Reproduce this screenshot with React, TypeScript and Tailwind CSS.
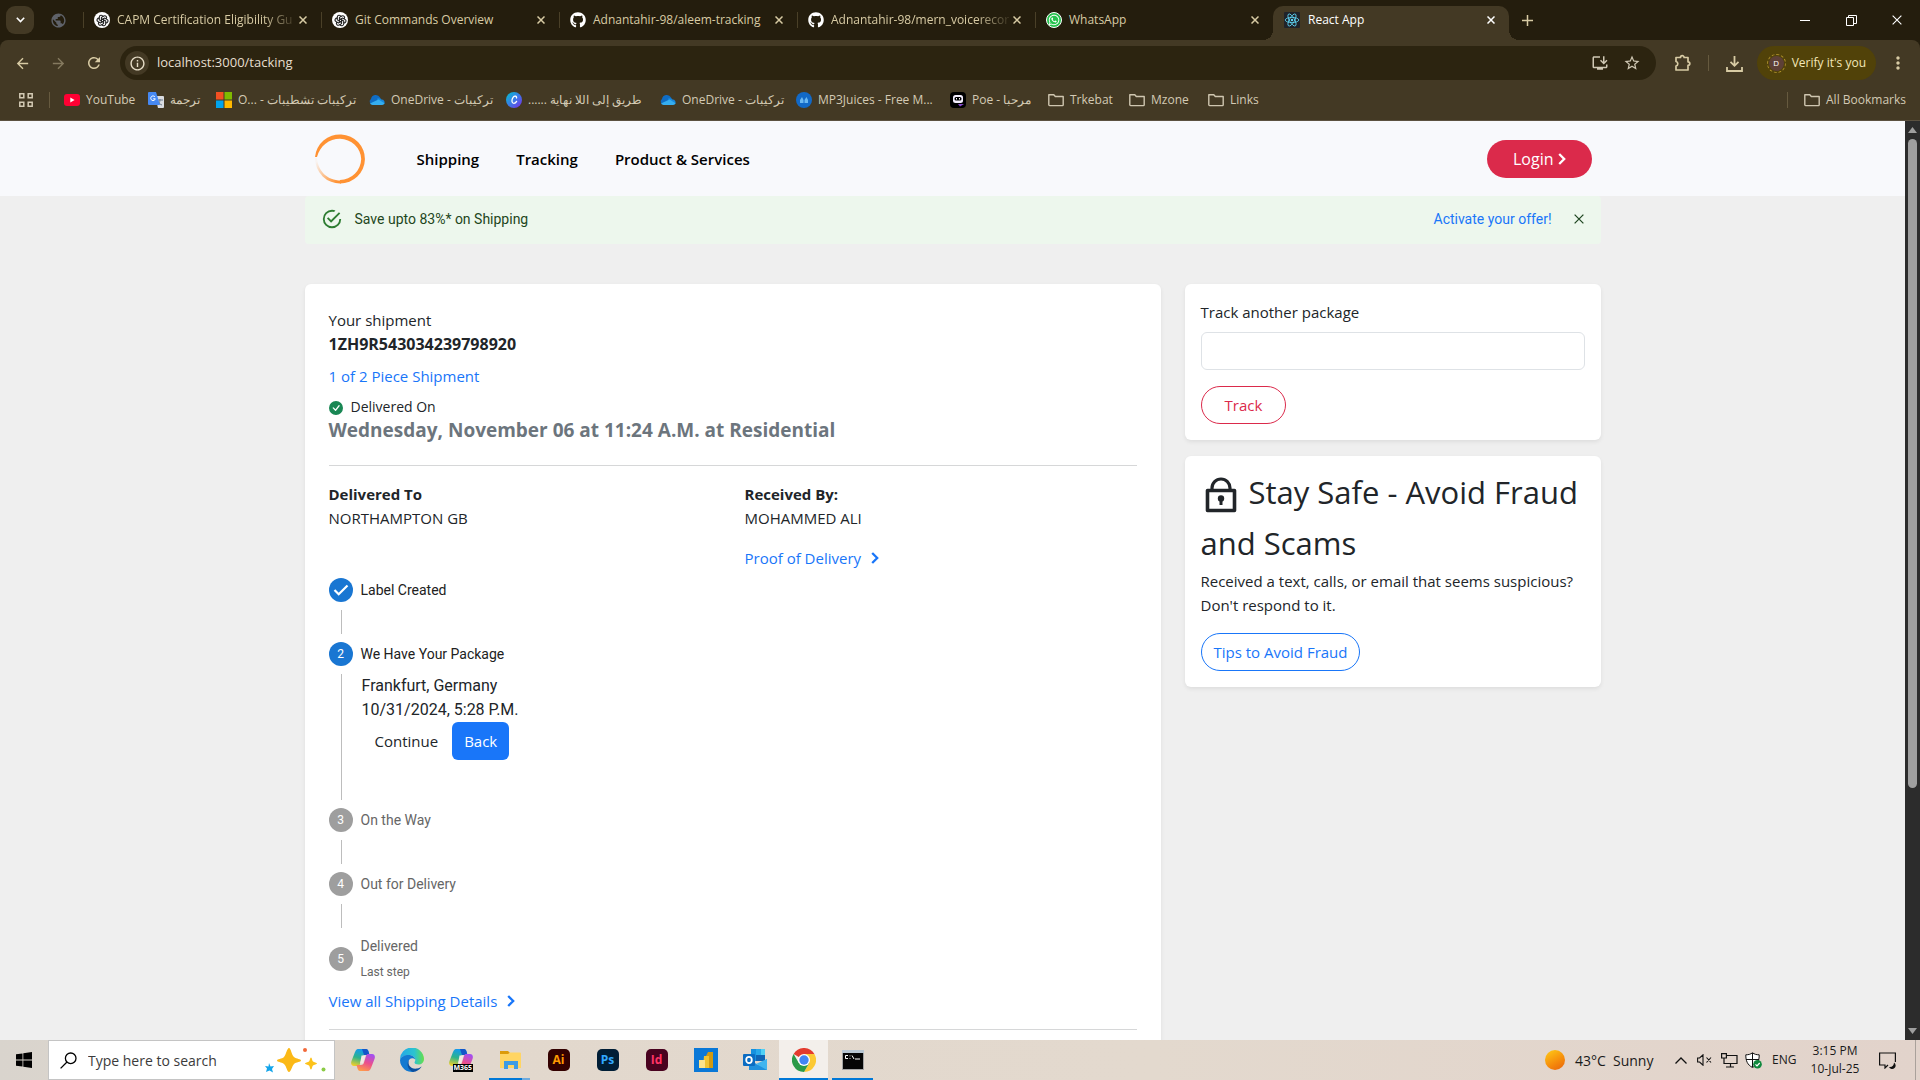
import React from "react";
import type { ReactNode } from "react";
import { FaGithub, FaWhatsapp } from "react-icons/fa";
import { TbBrandOpenai } from "react-icons/tb";
import {
  MdArrowBack,
  MdArrowForward,
  MdRefresh,
  MdInstallDesktop,
  MdStarBorder,
  MdMoreVert,
  MdPublic,
  MdInfoOutline,
} from "react-icons/md";
import { BsCheckCircleFill } from "react-icons/bs";

const CloseGlyph = ({ size = 8, width = 1.5 }: { size?: number; width?: number }) => (
  <svg width={size} height={size} viewBox="0 0 8 8" fill="none" stroke="currentColor" strokeWidth={width} aria-hidden="true">
    <path d="M.5.5l7 7M7.5.5l-7 7" />
  </svg>
);

const OpenAiIcon = () => (
  <span className="flex size-4 flex-none items-center justify-center rounded-full bg-white text-[#222]">
    <TbBrandOpenai size={13} />
  </span>
);

const GithubIcon = () => <FaGithub size={16} color="#fff" className="flex-none" />;

const WhatsAppIcon = () => (
  <span className="flex size-4 flex-none items-center justify-center rounded-full border border-white bg-[#25c24d] text-white">
    <FaWhatsapp size={12} />
  </span>
);

const ReactIcon = () => (
  <svg width="16" height="16" viewBox="0 0 16 16" fill="none" stroke="#61dafb" strokeWidth=".8" aria-hidden="true">
    <rect width="16" height="16" rx="1" fill="#20232a" stroke="none" />
    <circle cx="8" cy="8" r="1.2" fill="#61dafb" stroke="none" />
    <ellipse cx="8" cy="8" rx="6.8" ry="2.6" />
    <ellipse cx="8" cy="8" rx="6.8" ry="2.6" transform="rotate(60 8 8)" />
    <ellipse cx="8" cy="8" rx="6.8" ry="2.6" transform="rotate(120 8 8)" />
  </svg>
);

const YoutubeIcon = () => (
  <svg width="16" height="16" viewBox="0 0 16 16" aria-hidden="true">
    <rect y="2" width="16" height="12" rx="3" fill="#ff0033" />
    <path d="M6.3 5.6v4.8L10.6 8z" fill="#fff" />
  </svg>
);

const TranslateIcon = () => (
  <svg width="16" height="16" viewBox="0 0 16 16" aria-hidden="true">
    <path d="M7 4h8a1 1 0 0 1 1 1v10a1 1 0 0 1-1 1H10z" fill="#dadce0" />
    <path d="M9 8h6M12 7v1c0 2-1.500 4-3 5M10 9.500c1 2 2.500 3 4 3.500" stroke="#6b7b8c" strokeWidth="1" fill="none" />
    <path d="M1 0h7l4 13H1a1 1 0 0 1-1-1V1a1 1 0 0 1 1-1z" fill="#4688f1" />
    <path d="M7 5A2.300 2.300 0 1 0 7.300 6.800H5.200" stroke="#fff" strokeWidth="1" fill="none" />
  </svg>
);

const MicrosoftIcon = () => (
  <svg width="16" height="16" viewBox="0 0 16 16" aria-hidden="true">
    <path d="M0 0h7.500v7.500H0z" fill="#f25022" />
    <path d="M8.500 0H16v7.500H8.500z" fill="#7fba00" />
    <path d="M0 8.500h7.500V16H0z" fill="#00a4ef" />
    <path d="M8.500 8.500H16V16H8.500z" fill="#ffb900" />
  </svg>
);

const OneDriveIcon = () => (
  <svg width="16" height="16" viewBox="0 0 16 16" aria-hidden="true">
    <path d="M3.500 12.500A3 3 0 0 1 2 7a4.800 4.800 0 0 1 9-1.500l1 2z" fill="#0f6cc4" />
    <path d="M8 6.500A4.400 4.400 0 0 1 12.600 7.500a3 3 0 0 1 2.600 4.500L9 12z" fill="#1688dd" />
    <path d="M1 11.500 9.500 7.500l6 3.700a2.500 2.500 0 0 1-2.300 1.800H3.500A3 3 0 0 1 1 11.500z" fill="#35aef0" />
  </svg>
);

const CanvaIcon = () => (
  <svg width="16" height="16" viewBox="0 0 16 16" fill="none" aria-hidden="true">
    <defs>
      <linearGradient id="canva" x1="0" y1="0" x2="1" y2="1">
        <stop offset="0" stopColor="#00c4cc" />
        <stop offset=".5" stopColor="#3a7be8" />
        <stop offset="1" stopColor="#7d2ae8" />
      </linearGradient>
    </defs>
    <circle cx="8" cy="8" r="8" fill="url(#canva)" />
    <path d="M10.500 6c.6-2-2-2.500-3.400-.6-1.800 2.400-1.500 6 .7 6 1.200 0 2.200-.9 2.800-2" stroke="#fff" strokeWidth="1.300" strokeLinecap="round" />
  </svg>
);

const JuiceIcon = () => (
  <svg width="16" height="16" viewBox="0 0 16 16" aria-hidden="true">
    <circle cx="8" cy="8" r="8" fill="#1269c7" />
    <path d="M4 11V8l2-3 1.500 3v3zM8.500 11V8l2-3L12 8v3z" fill="#6ab8f2" />
  </svg>
);

const PoeIcon = () => (
  <svg width="16" height="16" viewBox="0 0 16 16" aria-hidden="true">
    <rect width="16" height="16" rx="4" fill="#000" />
    <path d="M8 12h6l-4 2.500z" fill="#8a4bd0" />
    <rect x="3" y="3" width="10" height="8" rx="2.500" fill="#f5f0ff" />
    <rect x="4.500" y="5" width="7" height="3.500" rx="1.500" fill="#000" />
    <path d="M6.500 6v1.500M9.500 6v1.500" stroke="#fff" />
  </svg>
);

const FolderIcon = () => (
  <svg width="16" height="16" viewBox="0 0 16 16" fill="none" stroke="#cfc6b0" strokeWidth="1.400" strokeLinejoin="round" aria-hidden="true">
    <path d="M.8 12.800V2.700h5l1.500 1.800h7.900v8.300a.8.8 0 0 1-.8.800H1.600a.8.8 0 0 1-.8-.8z" />
  </svg>
);

const tabs: { icon: ReactNode; title: string; clipped?: boolean }[] = [
  { icon: <OpenAiIcon />, title: "CAPM Certification Eligibility Gu", clipped: true },
  { icon: <OpenAiIcon />, title: "Git Commands Overview" },
  { icon: <GithubIcon />, title: "Adnantahir-98/aleem-tracking" },
  { icon: <GithubIcon />, title: "Adnantahir-98/mern_voicerecor", clipped: true },
  { icon: <WhatsAppIcon />, title: "WhatsApp" },
];

function TabStrip() {
  return (
    <div className="flex h-10 bg-[#241d0d] text-[#d8cba4]">
      <button aria-label="Search tabs" className="mt-[6px] ml-[6px] flex size-7 items-center justify-center rounded-[9px] bg-[#433924] text-white">
        <svg width="9" height="6" viewBox="0 0 9 6" fill="none" stroke="currentColor" strokeWidth="1.600" aria-hidden="true">
          <path d="M.8.8l3.700 3.700L8.200.8" />
        </svg>
      </button>
      <button aria-label="Pinned tab" className="flex w-[49px] items-center justify-center text-[#5f6269]">
        <MdPublic size={17} />
      </button>
      {tabs.map((t, i) => (
        <div key={i} className="flex w-[238px] min-w-0 items-center">
          <span className="h-4 w-px bg-[#4a4028]" />
          <div className="flex min-w-0 flex-1 items-center pr-[14px] pl-[10px]">
            {t.icon}
            <span
              className={
                t.clipped
                  ? "ml-[7px] flex-1 text-[12px] whitespace-nowrap [mask-image:linear-gradient(to_right,#000_80%,transparent)]"
                  : "ml-[7px] flex-1 text-[12px] whitespace-nowrap"
              }
            >
              {t.title}
            </span>
            <button aria-label="Close tab" className="flex-none">
              <CloseGlyph />
            </button>
          </div>
        </div>
      ))}
      <div className="relative mt-[6px] flex w-[236px] items-center gap-2 rounded-t-[10px] bg-[#433924] pr-[14px] pb-[6px] pl-[11px] text-white">
        <span className="absolute bottom-0 -left-2.5 size-2.5 bg-[radial-gradient(circle_at_0_0,transparent_10px,#433924_10px)]" />
        <span className="absolute -right-2.5 bottom-0 size-2.5 bg-[radial-gradient(circle_at_100%_0,transparent_10px,#433924_10px)]" />
        <ReactIcon />
        <span className="flex-1 text-[12px]">React App</span>
        <button aria-label="Close tab">
          <CloseGlyph />
        </button>
      </div>
      <button aria-label="New tab" className="flex w-9 items-center justify-center">
        <svg width="11" height="11" viewBox="0 0 11 11" stroke="currentColor" strokeWidth="1.500" aria-hidden="true">
          <path d="M5.500 0v11M0 5.500h11" />
        </svg>
      </button>
      <div className="ml-auto flex text-white">
        <button aria-label="Minimize" className="flex w-[46px] items-center justify-center">
          <span className="h-px w-2.5 bg-white" />
        </button>
        <button aria-label="Restore" className="flex w-[46px] items-center justify-center">
          <svg width="11" height="11" viewBox="0 0 11 11" fill="none" stroke="currentColor" aria-hidden="true">
            <path d="M.5 2.500h7v8h-7zM2.500 2.500v-2h8v8h-3" />
          </svg>
        </button>
        <button aria-label="Close window" className="flex w-[46px] items-center justify-center">
          <CloseGlyph size={10} width={0.9} />
        </button>
      </div>
    </div>
  );
}

function Toolbar() {
  return (
    <div className="flex h-[46px] items-center rounded-t-[8px] bg-[#433924] pt-[6px] pb-[6px] text-[#d8cba4]">
      <button aria-label="Back" className="ml-1 flex w-9 justify-center">
        <MdArrowBack size={17} />
      </button>
      <button aria-label="Forward" className="flex w-9 justify-center text-[#857a5f]">
        <MdArrowForward size={17} />
      </button>
      <button aria-label="Reload" className="flex w-9 justify-center">
        <MdRefresh size={18} />
      </button>
      <div className="ml-2 flex h-[34px] min-w-0 flex-1 items-center rounded-full bg-[#2c2410] pr-2 pl-[5px]">
        <button aria-label="Site information" className="flex size-6 items-center justify-center rounded-full bg-[#433924] text-[#e5dcc6]">
          <MdInfoOutline size={17} />
        </button>
        <input
          aria-label="Address"
          className="ml-2 min-w-0 flex-1 bg-transparent text-[13px] text-[#e6dfcf] outline-none"
          defaultValue="localhost:3000/tacking"
        />
        <button aria-label="Install app" className="flex w-8 justify-center text-[#d0c8b4]">
          <MdInstallDesktop size={18} />
        </button>
        <button aria-label="Bookmark this page" className="flex w-8 justify-center text-[#d0c8b4]">
          <MdStarBorder size={18} />
        </button>
      </div>
      <button aria-label="Extensions" className="ml-2 flex w-[38px] justify-center">
        <svg width="18" height="18" viewBox="0 0 18 18" fill="none" stroke="currentColor" strokeWidth="1.700" strokeLinejoin="round" aria-hidden="true">
          <path d="M2 3.500h4.500a1.800 1.800 0 0 1 3.600 0H14v4.300a1.800 1.800 0 0 1 0 3.600V16H2v-4a2.300 2.300 0 0 0 0-4.500z" />
        </svg>
      </button>
      <span className="ml-[6px] h-4 w-px bg-[#665a3f]" />
      <button aria-label="Downloads" className="ml-2 flex w-9 justify-center">
        <svg width="17" height="17" viewBox="0 0 17 17" fill="none" stroke="currentColor" strokeWidth="1.800" aria-hidden="true">
          <path d="M8.500 1v9.500M4.500 6.800l4 4 4-4M1 12v4h15v-4" />
        </svg>
      </button>
      <button className="ml-1 flex h-[34px] items-center gap-[6px] rounded-full bg-[#514209] pr-2.5 pl-2.5 text-[12px] font-medium text-[#f3e7b8]">
        <span className="flex size-[19px] items-center justify-center rounded-full border border-dashed border-[#b0912c]">
          <span className="flex size-[15px] items-center justify-center rounded-full bg-[#5d4037] text-[8px] text-white">D</span>
        </span>
        Verify it's you
      </button>
      <button aria-label="Menu" className="mx-1 flex w-9 justify-center">
        <MdMoreVert size={20} />
      </button>
    </div>
  );
}

const bookmarks = [
  { icon: <YoutubeIcon />, label: "YouTube", width: "w-[84px]" },
  { icon: <TranslateIcon />, label: "ترجمة", width: "w-[68px]" },
  { icon: <MicrosoftIcon />, label: "O... - تركيبات تشطيبات", width: "w-[153px]" },
  { icon: <OneDriveIcon />, label: "OneDrive - تركيبات", width: "w-[137px]" },
  { icon: <CanvaIcon />, label: "...... طريق إلى اللا نهاية", width: "w-[154px]" },
  { icon: <OneDriveIcon />, label: "OneDrive - تركيبات", width: "w-[136px]" },
  { icon: <JuiceIcon />, label: "MP3Juices - Free M...", width: "w-[154px]" },
  { icon: <PoeIcon />, label: "Poe - مرحبا", width: "w-[98px]" },
  { icon: <FolderIcon />, label: "Trkebat", width: "w-[81px]" },
  { icon: <FolderIcon />, label: "Mzone", width: "w-[79px]" },
  { icon: <FolderIcon />, label: "Links", width: "w-[70px]" },
];

function BookmarksBar() {
  return (
    <div className="flex h-[35px] items-center border-b border-[#5b5140] bg-[#433924] pb-[6px] pl-[19px] text-[12px] text-[#d3cab4]">
      <button aria-label="Apps">
        <svg width="14" height="14" viewBox="0 0 14 14" fill="none" stroke="currentColor" strokeWidth="1.500" aria-hidden="true">
          <path d="M.8.8h4v4h-4zM9.200.8h4v4h-4zM.8 9.200h4v4h-4zM9.200 9.200h4v4h-4z" />
        </svg>
      </button>
      <span className="mr-[14px] ml-4 h-4 w-px bg-[#665a3f]" />
      {bookmarks.map((b, i) => (
        <a key={i} href="#" className={`flex items-center gap-[6px] whitespace-nowrap ${b.width}`}>
          <span className="flex-none">{b.icon}</span>
          <span dir="ltr">{b.label}</span>
        </a>
      ))}
      <span className="ml-auto h-4 w-px bg-[#665a3f]" />
      <a href="#" className="mr-[14px] ml-4 flex items-center gap-[6px] whitespace-nowrap">
        <FolderIcon />
        All Bookmarks
      </a>
    </div>
  );
}

const Chevron = () => (
  <svg width="8" height="12" viewBox="0 0 8 12" fill="none" stroke="currentColor" strokeWidth="2.300" aria-hidden="true">
    <path d="M1.200 1l5 5-5 5" />
  </svg>
);

function SiteHeader() {
  return (
    <header className="bg-[#f8f9fc]">
      <div className="mx-auto flex h-[75px] max-w-[1320px] items-center pr-[21px] pl-[22px]">
        <svg width="50" height="50" viewBox="0 0 50 50" aria-label="Logo" role="img">
          <defs>
            <linearGradient id="ring" x1="0" y1=".2" x2=".8" y2="1">
              <stop offset="0" stopColor="#ff9233" stopOpacity=".05" />
              <stop offset="1" stopColor="#ff9233" />
            </linearGradient>
          </defs>
          <path d="M0 23A25 24.500 0 1 1 25 49.500L25 46A21.500 21.500 0 0 0 46.200 25A21.500 21 0 0 0 25 4.800C14 4.800 5 12 2 23z" fill="#ff9233" />
          <path d="M0 24A25 25.500 0 0 0 26 49.500L26 46.500C12 46.500 3 37 2 24z" fill="url(#ring)" />
        </svg>
        <nav className="ml-[52px] flex gap-[37px] text-[15px] font-semibold text-black">
          <a href="#">Shipping</a>
          <a href="#">Tracking</a>
          <a href="#">Product &amp; Services</a>
        </nav>
        <button className="ml-auto flex h-[38px] items-center gap-1 rounded-full bg-[#db2a4b] px-[26px] text-[16px] text-white">
          Login
          <Chevron />
        </button>
      </div>
    </header>
  );
}

function Offer() {
  return (
    <div className="flex h-12 items-center rounded-[4px] bg-[#edf7ed] pr-[17px] pb-[2px] pl-4 font-[Roboto,sans-serif] text-[14px] text-[#1e4620]">
      <svg width="22" height="22" viewBox="0 0 24 24" fill="#2e7d32" aria-hidden="true">
        <path d="M20,12A8,8 0 0,1 12,20A8,8 0 0,1 4,12A8,8 0 0,1 12,4C12.76,4 13.5,4.11 14.2,4.31L15.77,2.74C14.61,2.26 13.34,2 12,2A10,10 0 0,0 2,12A10,10 0 0,0 12,22A10,10 0 0,0 22,12M7.91,10.08L6.5,11.5L11,16L21,6L19.59,4.58L11,13.17L7.91,10.08Z" />
      </svg>
      <span className="ml-3">Save upto 83%* on Shipping</span>
      <a href="#" className="ml-auto text-[#1976f9]">
        Activate your offer!
      </a>
      <button aria-label="Dismiss" className="ml-[22px]">
        <CloseGlyph size={10} width={1} />
      </button>
    </div>
  );
}

function StepIcon({ value, done, active }: { value: string; done?: boolean; active?: boolean }) {
  return (
    <span
      className={
        done || active
          ? "flex size-6 flex-none items-center justify-center rounded-full bg-[#1976d2] text-[12px] text-white"
          : "flex size-6 flex-none items-center justify-center rounded-full bg-[#9e9e9e] text-[12px] text-white"
      }
    >
      {done ? (
        <svg width="16" height="12" viewBox="0 0 16 12" fill="none" stroke="currentColor" strokeWidth="2.200" aria-label="Completed" role="img">
          <path d="M1.500 6l4.200 4.200L14.500 1.500" />
        </svg>
      ) : (
        value
      )}
    </span>
  );
}

const Connector = () => <div className="my-2 ml-3 h-6 w-px bg-[#bdbdbd]" />;

function Stepper() {
  return (
    <div className="mt-2 font-[Roboto,sans-serif] text-[14px] text-[#666]">
      <div className="flex items-center gap-2 text-[#212121]">
        <StepIcon value="1" done />
        Label Created
      </div>
      <Connector />
      <div className="flex items-center gap-2 text-[#212121]">
        <StepIcon value="2" active />
        We Have Your Package
      </div>
      <div className="my-2 ml-3 border-l border-[#bdbdbd] pb-10 pl-5 text-[16px] leading-6 text-[#212529]">
        <p>Frankfurt, Germany</p>
        <p>10/31/2024, 5:28 P.M.</p>
        <div className="flex font-['Open_Sans','Noto_Sans',sans-serif] text-[15px]">
          <button className="h-[38px] pr-[14px] pl-[13px]">Continue</button>
          <button className="h-[38px] rounded-[6px] bg-[#1976f9] px-3 text-white">Back</button>
        </div>
      </div>
      <div className="flex items-center gap-2">
        <StepIcon value="3" />
        On the Way
      </div>
      <Connector />
      <div className="flex items-center gap-2">
        <StepIcon value="4" />
        Out for Delivery
      </div>
      <Connector />
      <div className="flex items-center gap-2">
        <StepIcon value="5" />
        <div className="flex flex-col gap-[6px] leading-5">
          <span>Delivered</span>
          <span className="text-[12px]">Last step</span>
        </div>
      </div>
    </div>
  );
}

function ShipmentCard() {
  return (
    <section className="col-span-2 rounded-[6px] bg-white p-6 pb-16 shadow-[0_2px_4px_rgba(0,0,0,0.075)]">
      <p>Your shipment</p>
      <p className="text-[16px] font-bold">1ZH9R543034239798920</p>
      <a href="#" className="mt-2 block text-[#1976f9]">
        1 of 2 Piece Shipment
      </a>
      <p className="mt-2 flex items-center gap-2 text-[14px] leading-[22px] text-[#212529]">
        <BsCheckCircleFill size={14} className="mt-[2px] text-[#198754]" />
        Delivered On
      </p>
      <h1 className="text-[19px] leading-6 font-bold text-[#6c757d]">Wednesday, November 06 at 11:24 A.M. at Residential</h1>
      <hr className="mt-[23px] mb-4 border-[#d6d7d8]" />
      <div className="grid grid-cols-2 gap-6">
        <div>
          <p className="font-bold">Delivered To</p>
          <p>NORTHAMPTON GB</p>
        </div>
        <div>
          <p className="font-bold">Received By:</p>
          <p>MOHAMMED ALI</p>
          <a href="#" className="mt-4 flex items-center gap-[10px] text-[#1976f9]">
            Proof of Delivery
            <Chevron />
          </a>
        </div>
      </div>
      <Stepper />
      <a href="#" className="mt-[7px] flex items-center gap-[10px] text-[#1976f9]">
        View all Shipping Details
        <Chevron />
      </a>
      <hr className="mt-4 border-[#d6d7d8]" />
    </section>
  );
}

function Sidebar() {
  return (
    <aside className="flex flex-col gap-4">
      <section className="rounded-[6px] bg-white p-4 shadow-[0_2px_4px_rgba(0,0,0,0.075)]">
        <label htmlFor="tracking-number" className="block">
          Track another package
        </label>
        <input id="tracking-number" className="mt-2 h-[38px] w-full rounded-[6px] border border-[#dee2e6] px-3" />
        <button className="mt-4 flex h-[38px] items-center rounded-full border border-[#db2a4b] px-[23px] text-[#db2a4b]">Track</button>
      </section>
      <section className="rounded-[6px] bg-white p-4 shadow-[0_2px_4px_rgba(0,0,0,0.075)]">
        <h2 className="-mt-[5px] text-[31px] leading-[51px] whitespace-nowrap">
          <svg width="40" height="40" viewBox="0 0 40 40" fill="none" stroke="currentColor" className="mr-2 inline-block" aria-hidden="true">
            <rect x="6.500" y="14.500" width="27" height="20" strokeWidth="3.600" strokeLinejoin="round" />
            <path d="M11 14v-2a9 9 0 0 1 18 0v2" strokeWidth="3.200" />
            <path d="M20 23v6" strokeWidth="3" />
            <circle cx="20" cy="22.500" r="3.200" fill="currentColor" stroke="none" />
          </svg>
          Stay Safe - Avoid Fraud
          <br />
          and Scams
        </h2>
        <p>
          Received a text, calls, or email that seems suspicious?
          <br />
          Don't respond to it.
        </p>
        <button className="mt-4 flex h-[38px] items-center rounded-full border border-[#1976f9] px-3 text-[#1976f9]">Tips to Avoid Fraud</button>
      </section>
    </aside>
  );
}

function ScrollBar() {
  return (
    <div className="flex w-[15px] flex-none flex-col items-center justify-between bg-[#2c2c2c] py-[6px] text-[#9f9f9f]">
      <svg width="9" height="6" viewBox="0 0 9 6" fill="currentColor" aria-hidden="true">
        <path d="M4.500 0L9 6H0z" />
      </svg>
      <div className="mt-[6px] mb-auto h-[71.5%] w-[9px] rounded-full bg-[#9f9f9f]" />
      <svg width="9" height="6" viewBox="0 0 9 6" fill="currentColor" aria-hidden="true">
        <path d="M4.500 6L9 0H0z" />
      </svg>
    </div>
  );
}

const CopilotIcon = () => (
  <svg width="24" height="24" viewBox="0 0 24 24" fill="none" aria-hidden="true">
    <defs>
      <linearGradient id="cpA" x1=".5" y1="0" x2=".2" y2="1">
        <stop offset="0" stopColor="#1399f2" />
        <stop offset=".5" stopColor="#2cb38c" />
        <stop offset="1" stopColor="#f5cf26" />
      </linearGradient>
      <linearGradient id="cpB" x1=".7" y1="0" x2=".3" y2="1">
        <stop offset="0" stopColor="#a44ff0" />
        <stop offset=".5" stopColor="#ec4f8b" />
        <stop offset="1" stopColor="#ff9b4a" />
      </linearGradient>
    </defs>
    <path d="M8 1h7c1.500 0 2 1 2.500 2.500L18.500 7H14c-2 0-2.500 1-3 2.500L9 16c-.5 1.500-1 2-2.500 2H3c-2.500 0-3.500-2-2.500-5L4 4c1-2.500 2-3 4-3z" fill="url(#cpA)" />
    <path d="M11 1h4c1.500 0 2 1 2.500 2.500L18.500 7H13z" fill="#1456c8" />
    <path d="M16 23H9c-1.500 0-2-1-2.500-2.500L5.500 17H10c2 0 2.500-1 3-2.500L15 8c.5-1.500 1-2 2.500-2H21c2.500 0 3.500 2 2.500 5L20 20c-1 2.500-2 3-4 3z" fill="url(#cpB)" />
    <path d="M10.500 7.500h4l-2.500 8h-3z" fill="#f4e9e4" />
  </svg>
);

const EdgeIcon = () => (
  <svg width="24" height="24" viewBox="0 0 24 24" aria-hidden="true">
    <defs>
      <linearGradient id="edgeA" x1="0" y1=".3" x2="1" y2=".3">
        <stop offset="0" stopColor="#24a8e8" />
        <stop offset=".6" stopColor="#2cc3d0" />
        <stop offset="1" stopColor="#66e04a" />
      </linearGradient>
    </defs>
    <path d="M0 12A12 12 0 0 1 24 11c0 3.500-2.500 5.500-5.500 5.500-2.500 0-4-1-4-2 0-.7.8-1 .8-2.700C15 9 12 7 8.500 7 4 7 1 9.500 0 12z" fill="url(#edgeA)" />
    <path d="M0 12C1 9 4 7 8.500 7c3.500 0 6.500 2 6.700 4.500A4 4 0 0 0 9 12c-2 3-.5 8.500 5 11.800A12 12 0 0 1 0 12z" fill="#1379d1" />
    <path d="M9 12c-2 5 2 9.500 8 8.500 2-.3 3.500-1.200 4.700-2A12 12 0 0 1 13 24C8 22 6 16 9 12z" fill="#0c4f9e" />
  </svg>
);

const M365Icon = () => (
  <span className="relative">
    <CopilotIcon />
    <span className="absolute top-4 left-1 bg-black px-px text-[7px] leading-[8px] font-bold text-white">M365</span>
  </span>
);

const ExplorerIcon = () => (
  <svg width="24" height="24" viewBox="0 0 24 24" aria-hidden="true">
    <path d="M2 3h8l2 2v3H2z" fill="#dc9b0a" />
    <path d="M2 6h8l2-1.500h10a1 1 0 0 1 1 1V20H2z" fill="#ffd563" />
    <path d="M6 13h14v8h-4v-4h-6v4H6z" fill="#3e9be4" />
  </svg>
);

function AdobeIcon({ text, className }: { text: string; className: string }) {
  return <span className={`flex size-[22px] items-center justify-center rounded-[5px] text-[12px] font-bold ${className}`}>{text}</span>;
}

const PowerBiIcon = () => (
  <svg width="24" height="24" viewBox="0 0 24 24" aria-hidden="true">
    <path d="M0 0h24v24H0z" fill="#0a78d7" />
    <path d="M14 4h5v16h-7V8z" fill="#d19a12" />
    <path d="M10 8h5v12H9z" fill="#efc332" />
    <path d="M5 12h6v8H5z" fill="#fbe38a" />
  </svg>
);

const OutlookIcon = () => (
  <svg width="24" height="24" viewBox="0 0 24 24" aria-hidden="true">
    <path d="M8 1h14v12H8z" fill="#1490df" />
    <path d="M13 1h5v6h-5z" fill="#28a8ea" />
    <path d="M18 1h4v6h-4z" fill="#50d0f5" />
    <path d="M13 7h9v6h-9z" fill="#0f64b5" />
    <path d="M6 11l9 6 9-6v11H6z" fill="#2090dd" />
    <path d="M24 11v11L13 16z" fill="#41b5ef" />
    <rect y="6" width="12" height="12" rx="1" fill="#0b6cc2" />
    <ellipse cx="6" cy="12" rx="2.800" ry="3.100" fill="none" stroke="#fff" strokeWidth="1.800" />
  </svg>
);

const ChromeIcon = () => (
  <svg width="24" height="24" viewBox="0 0 24 24" aria-hidden="true">
    <path d="M12 12L1.600 6A12 12 0 0 1 22.400 6z" fill="#e33b2e" />
    <path d="M12 6h10.400A12 12 0 0 1 12 24l5.200-9z" fill="#fcc934" />
    <path d="M1.600 6A12 12 0 0 0 12 24l5.200-9H6.800z" fill="#2a9a48" />
    <circle cx="12" cy="12" r="6" fill="#fff" />
    <circle cx="12" cy="12" r="4.700" fill="#4285f4" />
  </svg>
);

const TerminalIcon = () => (
  <svg width="24" height="24" viewBox="0 0 24 24" aria-hidden="true">
    <path d="M1 2h22v20H1z" fill="#a3a3a3" />
    <path d="M1 2h22v3H1z" fill="#b8c6d2" />
    <path d="M2 5h20v16H2z" fill="#050505" />
    <path d="M7 7.500H4.500v3H7M9 7.500v.8M9 10v.8M11 7.500l2 3.500M14 11h5" stroke="#fff" strokeWidth="1" fill="none" />
  </svg>
);

const apps: { name: string; icon: ReactNode; state?: "open" | "active" | "group" }[] = [
  { name: "Copilot", icon: <CopilotIcon /> },
  { name: "Edge", icon: <EdgeIcon /> },
  { name: "Microsoft 365", icon: <M365Icon /> },
  { name: "File Explorer", icon: <ExplorerIcon />, state: "group" },
  { name: "Illustrator", icon: <AdobeIcon text="Ai" className="bg-[#330000] text-[#ff9a00]" /> },
  { name: "Photoshop", icon: <AdobeIcon text="Ps" className="bg-[#001e36] text-[#31a8ff]" /> },
  { name: "InDesign", icon: <AdobeIcon text="Id" className="bg-[#49021f] text-[#ff3366]" /> },
  { name: "Power BI", icon: <PowerBiIcon /> },
  { name: "Outlook", icon: <OutlookIcon /> },
  { name: "Chrome", icon: <ChromeIcon />, state: "active" },
  { name: "Command Prompt", icon: <TerminalIcon />, state: "open" },
];

function Taskbar() {
  return (
    <footer className="flex h-10 flex-none bg-[linear-gradient(to_right,#d9d4cd,#e2d8cd_25%,#e3d9ce_60%,#e2d3cb)] text-black">
      <button aria-label="Start" className="flex w-12 items-center justify-center">
        <svg width="16" height="16" viewBox="0 0 16 16" aria-hidden="true">
          <path d="M0 2.300l6.500-.9v6.200H0zM7.300 1.200L16 0v7.600H7.300zM0 8.400h6.500v6.200L0 13.700zM7.300 8.400H16V16l-8.700-1.200z" />
        </svg>
      </button>
      <label className="flex w-[287px] items-center border border-[#c4c4c4] bg-white pr-2 pl-[11px]">
        <svg width="17" height="17" viewBox="0 0 17 17" fill="none" stroke="#000" strokeWidth="1.300" aria-hidden="true">
          <circle cx="10.700" cy="6.300" r="5.300" />
          <path d="M7 10L.6 16.400" />
        </svg>
        <input aria-label="Search" placeholder="Type here to search" className="ml-[11px] min-w-0 flex-1 bg-transparent text-[14px] outline-none placeholder:text-[#3b3b3b]" />
        <svg width="61" height="25" viewBox="0 0 61 25" aria-hidden="true">
          <path d="M24 0c2 0 2.500 7 5 9s7 2 7 3.500-5 1.500-7 3.500-3 8-5 8-2.500-6-5-8-7-2-7-3.500 5-1.500 7-3.500 3-9 5-9z" fill="#fbb917" />
          <path d="M46 9.500c1 0 1 3 2 4s4 1 4 2-3 1-4 2-1 4-2 4-1-3-2-4-4-1-4-2 3-1 4-2 1-4 2-4z" fill="#fcc21b" />
          <path d="M4 15l1.500 3.500L9 18l-2 3 1 3.500-3.500-2L1 24l1-3.500L0 18l3.500.5z" fill="#12a4ea" />
          <circle cx="40" cy="2" r="2" fill="#f2693a" />
          <circle cx="58.500" cy="21.500" r="2" fill="#8bcb46" />
        </svg>
      </label>
      <div className="ml-[3px] flex">
        {apps.map((a) => (
          <button
            key={a.name}
            aria-label={a.name}
            className={a.state === "active" ? "relative flex w-[49px] items-center justify-center bg-[#f3efeb]" : "relative flex w-[49px] items-center justify-center"}
          >
            {a.icon}
            {a.state === "active" && <span className="absolute inset-x-0 bottom-0 h-[2px] bg-[#0078d7]" />}
            {a.state === "open" && <span className="absolute inset-x-1 bottom-0 h-[2px] bg-[#0078d7]" />}
            {a.state === "group" && (
              <span className="absolute inset-x-1 bottom-0 h-[2px] border-r-8 border-[#6fabdd] bg-[#0078d7]" />
            )}
          </button>
        ))}
      </div>
      <div className="ml-auto flex items-center text-[14px] whitespace-nowrap text-[#1a1a1a]">
        <span className="size-5 rounded-full bg-[linear-gradient(150deg,#ffcc18,#f58a0b_60%,#e8620c)]" />
        <span className="ml-[10px] w-[38px]">43°C</span>
        <span className="w-[62px]">Sunny</span>
        <button aria-label="Show hidden icons" className="w-[22px]">
          <svg width="12" height="7" viewBox="0 0 12 7" fill="none" stroke="#111" strokeWidth="1.300" aria-hidden="true">
            <path d="M.5 6.500L6 1l5.500 5.500" />
          </svg>
        </button>
        <svg width="15" height="12" viewBox="0 0 15 12" fill="none" stroke="#111" strokeWidth="1.100" aria-hidden="true">
          <path d="M.6 4h2L6 .8v10.400L2.600 8h-2zM9.500 3.500l4.500 5M14 3.500l-4.500 5" />
        </svg>
        <svg width="17" height="15" viewBox="0 0 17 15" fill="none" stroke="#111" strokeWidth="1.200" className="ml-[9px]" aria-hidden="true">
          <path d="M6 2.500h10v8H3V7M5 14h8M9.500 10.500V14M.6.600h4.800V5H.6zM3 5v3" />
        </svg>
        <svg width="17" height="17" viewBox="0 0 17 17" className="ml-[7px]" aria-hidden="true">
          <path d="M7.500.8c2 1.500 4 2 6.700 2 0 6-1.500 10-6.700 12.700C2.300 12.800.8 8.800.8 2.800c2.700 0 4.700-.5 6.700-2z" fill="#fff" stroke="#111" />
          <path d="M7.500 1v14M1 7.500h13" stroke="#111" />
          <circle cx="12.500" cy="12.300" r="4.300" fill="#10893e" />
          <path d="M10.500 12.300l1.500 1.500 2.700-2.800" fill="none" stroke="#fff" strokeWidth="1.200" />
        </svg>
        <span className="ml-[10px] w-7 text-[12px]">ENG</span>
        <div className="w-[70px] text-center text-[12px] leading-[18px]">
          <div>3:15 PM</div>
          <div>10-Jul-25</div>
        </div>
        <button aria-label="Notifications" className="ml-[9px]">
          <svg width="17" height="17" viewBox="0 0 17 17" fill="none" stroke="#111" strokeWidth="1.200" aria-hidden="true">
            <path d="M9 13l-3 3v-3H.6V1h15.800v9" />
            <path d="M15 10.500a3.500 3.500 0 1 1-5 4.500c3 .5 5-1.500 5-4.500z" fill="#111" stroke="none" />
          </svg>
        </button>
        <span className="mr-1 ml-[19px] h-10 w-px bg-[#aaa19b]" />
      </div>
    </footer>
  );
}

export default function App() {
  return (
    <div className="flex h-screen flex-col overflow-hidden font-['Open_Sans','Noto_Sans',sans-serif]">
      <div className="flex-none bg-[#241d0d]">
        <TabStrip />
        <Toolbar />
        <BookmarksBar />
      </div>
      <div className="flex min-h-0 flex-1">
        <main className="min-w-0 flex-1 overflow-hidden bg-[#efefef] text-[15px] leading-6 text-[#212529]">
          <SiteHeader />
          <div className="mx-auto max-w-[1320px] px-3">
            <Offer />
            <div className="mt-10 grid grid-cols-3 items-start gap-6">
              <ShipmentCard />
              <Sidebar />
            </div>
          </div>
        </main>
        <ScrollBar />
      </div>
      <Taskbar />
    </div>
  );
}
